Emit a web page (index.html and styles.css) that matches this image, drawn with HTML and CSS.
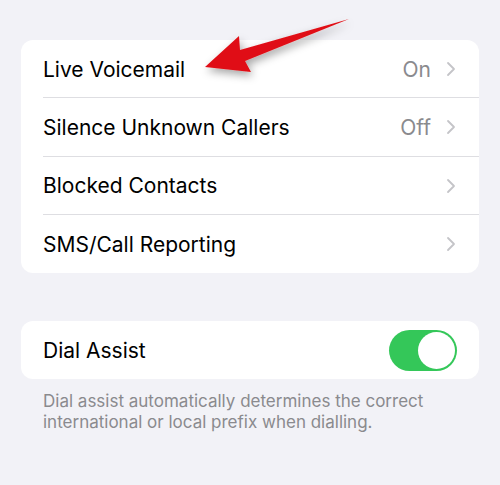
FILE: index.html
```html
<!DOCTYPE html>
<html>
<head>
    <meta charset="utf-8">
    <link rel="stylesheet" href="styles.css">
    <title>Phone</title>
</head>
<body>
<div class="page">
    <div class="group">
        <div class="row">
            <span class="label">Live Voicemail</span>
            <span class="value">On</span>
            <svg class="chev" viewBox="0 0 10 16"><path d="M2 2 L8 8 L2 14"/></svg>
        </div>
        <div class="row">
            <span class="label">Silence Unknown Callers</span>
            <span class="value">Off</span>
            <svg class="chev" viewBox="0 0 10 16"><path d="M2 2 L8 8 L2 14"/></svg>
        </div>
        <div class="row">
            <span class="label">Blocked Contacts</span>
            <svg class="chev" viewBox="0 0 10 16"><path d="M2 2 L8 8 L2 14"/></svg>
        </div>
        <div class="row">
            <span class="label">SMS/Call Reporting</span>
            <svg class="chev" viewBox="0 0 10 16"><path d="M2 2 L8 8 L2 14"/></svg>
        </div>
    </div>

    <div class="group group-2">
        <div class="row">
            <span class="label">Dial Assist</span>
            <div class="toggle"><div class="knob"></div></div>
        </div>
    </div>
    <p class="note">Dial assist automatically determines the correct international or local prefix when dialling.</p>
</div>

<!-- annotation arrow drawn over the list -->
<svg class="arrow" width="500" height="100" viewBox="0 0 500 100">
    <defs>
        <filter id="sh" x="-20%" y="-50%" width="140%" height="200%">
            <feDropShadow dx="2" dy="4" stdDeviation="4" flood-color="#000" flood-opacity="0.35"/>
        </filter>
    </defs>
    <polygon filter="url(#sh)" fill="#e01015"
        points="205,67 239,36 240,50 349,19 245,61 251,72"/>
</svg>
</body>
</html>
```

FILE: styles.css
```css
* { margin: 0; padding: 0; box-sizing: border-box; }

html, body { height: 100%; }
body {
    background: #f2f2f7;
    font-family: Inter, "Open Sans", sans-serif;
    color: #000;
    position: relative;
}

.page { padding: 40px 21px 0 21px; }

.group {
    background: #fff;
    border-radius: 12px;
    overflow: hidden;
}
.group-2 { margin-top: 48px; }

.row {
    display: flex;
    align-items: center;
    height: 58.25px;
    margin-left: 22px;
    padding-right: 23px;
    padding-top: 1px;
    border-bottom: 1px solid #dedee2;
}
.row:last-child { border-bottom: none; }

.label {
    flex: 1;
    font-size: 21px;
}
.value {
    font-size: 21px;
    color: #8a8a8e;
    margin-right: 15px;
}
.chev {
    width: 10px;
    height: 16px;
    fill: none;
    stroke: #c4c4c8;
    stroke-width: 1.8;
    stroke-linecap: round;
    stroke-linejoin: round;
}

.toggle {
    width: 68px;
    height: 41px;
    border-radius: 21px;
    background: #34c759;
    padding: 2px;
    display: flex;
    justify-content: flex-end;
    margin-right: -1px;
}
.knob {
    width: 37px;
    height: 37px;
    border-radius: 50%;
    background: #fff;
}

.note {
    margin: 12px 22px 0 22px;
    font-size: 17px;
    line-height: 21px;
    color: #8a8a8e;
}

.arrow {
    position: absolute;
    left: 0;
    top: 0;
}
```
